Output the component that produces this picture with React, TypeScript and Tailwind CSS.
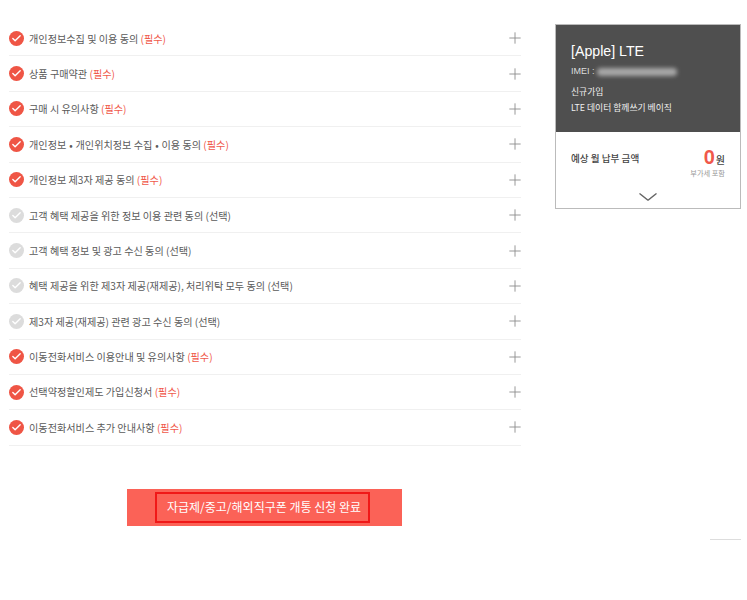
import { Check, ChevronDown, Plus } from "lucide-react";

const terms = [
  { label: "개인정보수집 및 이용 동의", on: true },
  { label: "상품 구매약관", on: true },
  { label: "구매 시 유의사항", on: true },
  { label: "개인정보 \u200a•\u200a 개인위치정보 수집 \u200a•\u200a 이용 동의", on: true },
  { label: "개인정보 제3자 제공 동의", on: true },
  { label: "고객 혜택 제공을 위한 정보 이용 관련 동의", on: false },
  { label: "고객 혜택 정보 및 광고 수신 동의", on: false },
  { label: "혜택 제공을 위한 제3자 제공(재제공), 처리위탁 모두 동의", on: false },
  { label: "제3자 제공(재제공) 관련 광고 수신 동의", on: false },
  { label: "이동전화서비스 이용안내 및 유의사항", on: true },
  { label: "선택약정할인제도 가입신청서", on: true },
  { label: "이동전화서비스 추가 안내사항", on: true },
];

function TermRow({ label, on }: { label: string; on: boolean }) {
  return (
    <div className="flex h-[35.4px] items-center border-b border-[#f0f0f0]">
      <span
        className={`flex h-[15px] w-[15px] shrink-0 items-center justify-center rounded-full ${on ? "bg-[#ef5545]" : "bg-[#dcdcdc]"}`}
      >
        <Check className="h-[11px] w-[11px] text-white" strokeWidth={3} />
      </span>
      <span className="ml-[5px] flex-1 text-[10.15px] text-[#5a5a5a]">
        {label}{" "}
        {on ? <span className="text-[#f0584a]">(필수)</span> : <span>(선택)</span>}
      </span>
      <Plus className="mr-[-3px] h-[18px] w-[18px] text-[#8c8c8c]" strokeWidth={1.2} />
    </div>
  );
}

export default function App() {
  return (
    <div className="relative h-[600px] w-[747px] overflow-hidden bg-white font-['Noto_Sans_CJK_KR','Liberation_Sans',sans-serif]">
      <div className="flex items-start pl-[9px] pt-[21px]">
        <div className="w-[512px]">
          {terms.map((t) => (
            <TermRow key={t.label} label={t.label} on={t.on} />
          ))}
        </div>
        <div className="ml-[34px] mt-[3px] h-[185px] w-[186px] border border-[#bbb]">
          <div className="h-[107px] bg-[#4f4f4f] px-[15px] pt-[15px] text-white">
            <div className="font-['Liberation_Sans',sans-serif] text-[14.2px] leading-[22px]">[Apple] LTE</div>
            <div className="mt-[2px] flex h-[16px] items-center text-[9px] text-[#ddd]">
              <span className="font-['Liberation_Sans',sans-serif]">IMEI :</span>
              <span className="ml-[2px] h-[8px] w-[80px] rounded-full bg-[#a8a8a8] blur-[2px]" />
            </div>
            <div className="mt-[4px] text-[8.8px] leading-[16px] text-[#eee]">
              <div>신규가입</div>
              <div>LTE 데이터 함께쓰기 베이직</div>
            </div>
          </div>
          <div className="flex justify-between px-[15px] pt-[14px]">
            <span className="text-[9.6px] font-medium leading-[24px] text-[#444]">예상 월 납부 금액</span>
            <div className="flex flex-col items-end">
              <div className="flex items-baseline">
                <span className="font-['Liberation_Sans',sans-serif] text-[20px] font-bold leading-[22px] text-[#f0584a]">0</span>
                <span className="ml-[1px] text-[10px] font-medium text-[#444]">원</span>
              </div>
              <span className="text-[7.2px] leading-[10px] text-[#999]">부가세 포함</span>
            </div>
          </div>
          <ChevronDown className="mx-auto mt-[6px] h-[26px] w-[26px] scale-x-125 text-[#666]" strokeWidth={1} />
        </div>
      </div>

      <div className="ml-[127px] mt-[43.2px] flex h-[37px] w-[275px] items-center bg-[#fb6257] pl-[28px]">
        <button className="h-[31px] w-[215px] border-2 border-[#f01818] pl-[3px] text-[12px] text-white">
          자급제/중고/해외직구폰 개통 신청 완료
        </button>
      </div>

      <div className="absolute left-[710px] top-[539px] h-[1px] w-[31px] bg-[#ddd]" />
    </div>
  );
}
